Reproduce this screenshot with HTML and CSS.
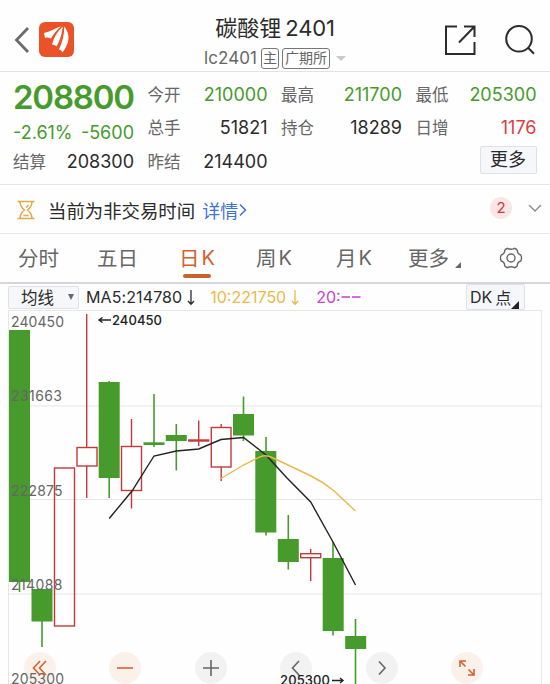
FILE: index.html
```
<!DOCTYPE html>
<html lang="zh-CN">
<head>
    <meta charset="UTF-8" />
    <meta name="viewport" content="width=device-width, initial-scale=1.0"/>
    <title>碳酸锂2401</title>
    <link rel="stylesheet" href="styles.css">
</head>
<body>

<header class="topbar">
    <div class="side">
        <svg width="16" height="28" viewBox="0 0 16 28" fill="none" stroke="#6b6b6b" stroke-width="2.8"><path d="M14 2 2.500 14 14 26"/></svg>
        <svg class="logo" width="35" height="35" viewBox="0 0 35 35">
            <rect width="35" height="35" rx="6" fill="#ea5228"/>
            <path d="M5 11C11 9.500 16 6.500 22 4.200C17.500 8 14.500 12 12 16.500C10 15.300 7.500 15.300 6 16Z" fill="#fff"/>
            <path d="M13 22.500C15 15.500 18.500 9 23.800 4.500C23 11.500 21 18.500 17.500 24.500C16.500 23.500 15 22.500 13 22.500Z" fill="#fff"/>
            <path d="M20 27.500C23.500 20 25.500 12 25.200 4.500C29.500 9.500 30.500 15.500 28.500 21.500C27 25 25.500 28 23.500 30.500C23 29.200 22 28 20 27.500Z" fill="#fff"/>
        </svg>
    </div>
    <div class="title">
        <h1>碳酸锂<span>2401</span></h1>
        <div class="subtitle">
            <span class="code">lc2401</span>
            <span class="tag">主</span>
            <span class="tag">广期所</span>
            <i class="caret"></i>
        </div>
    </div>
    <div class="side right">
        <svg width="32" height="32" viewBox="0 0 32 32" fill="none" stroke="#2c2c2c" stroke-width="2"><path d="M13 2.500H2V30H30.500V18M30.500 13V2.500H20M30 3 15 18.500"/></svg>
        <svg width="32" height="32" viewBox="0 0 32 32" fill="none" stroke="#2c2c2c" stroke-width="2"><circle cx="15" cy="14.800" r="12.800"/><path d="M24 23.800 30 29.800"/></svg>
    </div>
</header>

<section class="quote">
    <div class="last">
        <strong>208800</strong>
        <div class="change"><span>-2.61%</span><span>-5600</span></div>
    </div>
    <div class="item"><label>今开</label><b class="green">210000</b></div>
    <div class="item"><label>最高</label><b class="green">211700</b></div>
    <div class="item"><label>最低</label><b class="green">205300</b></div>
    <div class="item"><label>总手</label><b>51821</b></div>
    <div class="item"><label>持仓</label><b>18289</b></div>
    <div class="item"><label>日增</label><b class="red">1176</b></div>
    <div class="item"><label>结算</label><b>208300</b></div>
    <div class="item"><label>昨结</label><b>214400</b></div>
    <button class="more">更多</button>
</section>

<section class="notice">
    <svg width="18" height="20" viewBox="0 0 18 20" fill="none" stroke="#e5a846" stroke-width="1.500"><path d="M.5 1.500H17.500M.5 18.500H17.500M3 1.500C3 6 5 8 7.500 10C5 12 3 14 3 18.500M15 1.500C15 6 13 8 10.500 10C13 12 15 14 15 18.500M6.500 15.500H11.500M9 7.500 11.500 5"/></svg>
    <span class="notice-text">当前为非交易时间</span>
    <a class="link">详情<svg width="8" height="14" viewBox="0 0 8 14" fill="none" stroke="#3f74cf" stroke-width="1.500"><path d="M1 1.500 6.500 7 1 12.500"/></svg></a>
    <span class="count">2</span>
    <svg width="14" height="8" viewBox="0 0 14 8" fill="none" stroke="#888" stroke-width="1.300"><path d="M1 1 7 7 13 1"/></svg>
</section>

<nav class="tabs">
    <a>分时</a>
    <a>五日</a>
    <a class="active">日<span>K</span></a>
    <a>周<span>K</span></a>
    <a>月<span>K</span></a>
    <a>更多<i class="corner"></i></a>
    <svg width="24" height="24" viewBox="0 0 24 24" fill="none" stroke="#666" stroke-width="1.400" stroke-linejoin="round"><path d="M8.500 2.300Q12 4.300 15.500 2.300Q17.500 2.800 18.300 4.300Q18.300 8 21.800 9Q23.300 12 21.800 15Q18.300 16 18.300 19.700Q17.500 21.200 15.500 21.700Q12 19.700 8.500 21.700Q6.500 21.200 5.700 19.700Q5.700 16 2.200 15Q.7 12 2.200 9Q5.700 8 5.700 4.300Q6.500 2.800 8.500 2.300Z"/><circle cx="12" cy="12" r="4"/></svg>
</nav>

<div class="indicators">
    <button class="select">均线<i class="caret"></i></button>
    <span class="ma5">MA5:214780<svg width="8" height="17" viewBox="0 0 8 17" fill="none" stroke="currentColor" stroke-width="1.300"><path d="M4 1V15M1 12 4 15.300 7 12"/></svg></span>
    <span class="ma10">10:221750<svg width="8" height="17" viewBox="0 0 8 17" fill="none" stroke="currentColor" stroke-width="1.300"><path d="M4 1V15M1 12 4 15.300 7 12"/></svg></span>
    <span class="ma20">20:<svg width="20" height="4" viewBox="0 0 20 4" stroke="currentColor" stroke-width="1.300"><path d="M.5 2H9M11 2H19.500"/></svg></span>
    <button class="dk">DK<span>点</span><i class="corner"></i></button>
</div>

<main class="chart">
    <div class="controls">
        <button class="warm"><svg width="16" height="16" viewBox="0 0 16 16"><path d="M8 1 1.500 8 8 15M14 1 7.500 8 14 15"/></svg></button>
        <button class="warm"><svg width="16" height="16" viewBox="0 0 16 16"><path d="M0 8H16"/></svg></button>
        <button><svg width="16" height="16" viewBox="0 0 16 16"><path d="M0 8H16M8 0V16"/></svg></button>
        <button><svg width="16" height="16" viewBox="0 0 16 16"><path d="M11 1 4.500 8 11 15"/></svg></button>
        <button><svg width="16" height="16" viewBox="0 0 16 16"><path d="M5 1.500 11 8 5 14.500"/></svg></button>
        <button class="warm"><svg width="16" height="16" viewBox="0 0 16 16"><path d="M1 7V1H7M1 1 6.500 6.500M15 9V15H9M15 15 9.500 9.500"/></svg></button>
    </div>

    <svg class="kline" width="550" height="374" viewBox="0 310 550 374">
        <path class="grid" d="M8.500 684V310.500H541.500V684M8.500 406H541.500M8.500 499.500H541.500M8.500 594H541.500"/>

        <!-- velas -->
        <g class="down">
            <path d="M19.500 330V592M42 589V647M109.200 381V498M154 394V447M176.300 424V470.500M243.500 396.500V441M266 437V535.500M288.300 515V569.500M333 542V635.500M355.500 619V684"/>
            <rect x="9" y="330" width="21" height="252"/>
            <rect x="31.500" y="589" width="21" height="32.500"/>
            <rect x="98.700" y="382" width="21" height="96"/>
            <rect x="143.500" y="442.300" width="21" height="2.700"/>
            <rect x="165.800" y="435" width="21" height="6"/>
            <rect x="233" y="414" width="21" height="21.500"/>
            <rect x="255.300" y="451" width="21" height="81.500"/>
            <rect x="277.800" y="539" width="21" height="23"/>
            <rect x="322.700" y="558" width="21" height="73"/>
            <rect x="345.200" y="636" width="21" height="13"/>
        </g>
        <g class="up">
            <path d="M86.700 314V447M86.700 466V498M131.500 419V446M131.500 491V508.500M198.700 420.500V446M221.200 424V427M221.200 467V481M310.700 549V553M310.700 558V581"/>
            <rect x="54.500" y="468" width="20" height="158"/>
            <rect x="77" y="447.500" width="20" height="18.500"/>
            <rect x="121.500" y="446.500" width="20" height="44"/>
            <rect x="188.700" y="440" width="20" height="1"/>
            <rect x="211.300" y="427.500" width="19.700" height="39.500"/>
            <rect x="300.700" y="553.700" width="20" height="4"/>
        </g>

        <path class="line5" d="M109.200 518.500 132 491 154 456 176.300 451 198.700 449 221 439.500 243.500 437.500 266 455 287 478 310.700 502 333 542 355.500 585"/>
        <path class="line10" d="M221 478.500 243.500 465 260 456.800Q266 454.500 272 457.500L288 465 311 476 Q323 482 333 490L355.500 511"/>

        <g class="axis">
            <text x="11" y="326.500" textLength="53">240450</text>
            <text x="11" y="401" textLength="51">231663</text>
            <text x="11" y="495.500" textLength="51.500">222875</text>
            <text x="11" y="590" textLength="51.500">214088</text>
            <text x="11" y="683.700" textLength="53">205300</text>
        </g>
        <g class="mark">
            <text x="112" y="325" textLength="50">240450</text>
            <path d="M111 320H99M102.500 317.500 99 320 102.500 322.500"/>
            <text x="280" y="685" textLength="50">205300</text>
            <path d="M332 680.500H343M340 678 343 680.500 340 683"/>
        </g>
    </svg>
</main>

</body>
</html>
```
FILE: styles.css
```
* {
    box-sizing: border-box;
}

body {
    margin: 0;
    width: 550px;
    height: 684px;
    overflow: hidden;
    background-color: #fefefe;
    color: #2b2b2b;
    font-family: Inter, "Noto Sans CJK SC", sans-serif;
    font-weight: 400;
}

svg {
    display: block;
    flex: none;
}

button {
    font-family: inherit;
    color: inherit;
    padding: 0;
    border: 1px solid #dfe1e6;
    border-radius: 2px;
    background-color: #f6f7fa;
}

.caret {
    border: 5px solid transparent;
    border-top-color: #c8c8c8;
    border-bottom: none;
}

.corner {
    border-left: 6px solid transparent;
    border-bottom: 6px solid #666;
}

/* cabecera */
.topbar {
    display: flex;
    justify-content: space-between;
    height: 72px;
    padding: 0 14px 0 14px;
    border-bottom: 1px solid #e2e2e2;
}

.side {
    display: flex;
    align-items: center;
    width: 92px;
    padding-top: 8px;
}

.logo {
    margin-left: 9px;
}

.right {
    justify-content: space-between;
}

.title {
    padding-top: 12px;
}

h1 {
    display: flex;
    justify-content: center;
    margin: 0;
    font-size: 22px;
    font-weight: 400;
    line-height: 32px;
}

h1 span {
    font-size: 22px;
    letter-spacing: -0.2px;
    padding-left: 4px;
}

.subtitle {
    display: flex;
    align-items: center;
    height: 28px;
    color: #666;
}

.code {
    font-size: 17px;
    letter-spacing: 0.1px;
    margin-right: 4px;
}

.tag {
    height: 21px;
    margin-right: 3px;
    padding: 0 1px;
    border: 1px solid #777;
    border-radius: 3px;
    font-size: 14px;
    line-height: 18px;
}

.tag + .tag {
    padding: 0 2px;
}

.subtitle .caret {
    margin-left: 3px;
}

/* cotización */
.quote {
    display: grid;
    grid-template-columns: 121px 120px 121px 121px;
    grid-template-rows: repeat(3, 33.5px);
    column-gap: 13.5px;
    height: 113px;
    padding: 6px 13px 0;
    border-bottom: 1px solid #e8e8e8;
}

.last {
    grid-row: span 2;
    color: #469b2c;
}

.last strong {
    display: block;
    font-size: 33px;
    font-weight: 600;
    line-height: 38px;
    letter-spacing: -1.2px;
}

.change {
    display: flex;
    justify-content: space-between;
    font-size: 18px;
    line-height: 34px;
}

.item {
    display: flex;
    justify-content: space-between;
    align-items: center;
    line-height: 30px;
}

.item label {
    color: #666;
    font-size: 16.500px;
}

.item b {
    font-size: 18px;
    font-weight: 400;
}

.item .green {
    color: #469b2c;
}

.item .red {
    color: #d9403f;
}

.more {
    grid-column: 4;
    justify-self: end;
    width: 57px;
    height: 28px;
    margin-top: 1px;
    font-size: 18px;
    line-height: 26px;
}

/* aviso */
.notice {
    display: flex;
    align-items: center;
    height: 49px;
    padding: 1px 8px 0 17px;
    border-bottom: 1px solid #e8e8e8;
    font-size: 18.400px;
}

.notice > svg:last-child {
    margin-bottom: 4px;
}

.notice-text {
    margin: 0 7px 0 13px;
}

.link {
    display: flex;
    align-items: center;
    color: #3f74cf;
    font-size: 18px;
}

.link svg {
    margin-left: 1px;
}

.count {
    width: 22px;
    height: 22px;
    margin-left: auto;
    margin-right: 16px;
    margin-bottom: 3px;
    border-radius: 50%;
    background-color: #fce5e4;
    color: #c4403d;
    font-size: 15px;
    line-height: 22px;
    text-align: center;
}

/* pestañas */
.tabs {
    display: grid;
    grid-template-columns: 79px 82px 77px 80px 72px 91px 24px;
    align-items: center;
    height: 50px;
    padding-left: 18px;
    border-bottom: 2px solid #d6d6d6;
    color: #666;
    font-size: 20.500px;
}

.tabs a {
    display: flex;
    height: 48px;
    line-height: 49px;
}

.tabs a span {
    padding-left: 2px;
    font-size: 20px;
}

.tabs .active {
    position: relative;
    color: #d0622d;
}

.tabs .active::after {
    content: "";
    position: absolute;
    left: 4px;
    bottom: 4px;
    width: 28px;
    height: 4px;
    border-radius: 2px;
    background-color: #c9622e;
}

.tabs .corner {
    align-self: flex-end;
    margin: 0 0 14px 6px;
}

/* indicadores */
.indicators {
    display: flex;
    align-items: center;
    height: 26px;
    padding: 0 25px 0 8px;
    font-size: 16px;
}

.indicators span {
    display: flex;
    align-items: center;
}

.select {
    display: flex;
    align-items: center;
    justify-content: space-between;
    width: 71px;
    height: 23px;
    margin-right: 7px;
    padding: 0 4px 0 12px;
    font-size: 16.500px;
}

.select .caret {
    border-width: 6px 3.500px 0;
    border-top-color: #666;
}

.ma5 {
    letter-spacing: 0.1px;
}

.ma5 svg,
.ma10 svg {
    margin-left: 5px;
}

.ma10 {
    margin-left: 15px;
    color: #e9b949;
}

.ma20 {
    margin-left: 17px;
    color: #c63fd4;
}

.dk {
    display: flex;
    align-items: center;
    width: 59px;
    height: 26px;
    margin-left: auto;
    padding-left: 3px;
    font-size: 16px;
}

.dk span {
    padding-left: 3px;
}

.dk .corner {
    align-self: flex-end;
    border-left-width: 8px;
    border-bottom: 8px solid #222;
}

/* gráfico */
.chart {
    position: relative;
    height: 374px;
}

.kline {
    position: relative;
    pointer-events: none;
}

.controls {
    position: absolute;
    left: 24px;
    bottom: 0;
    display: flex;
    gap: 53.400px;
}

.controls button {
    display: flex;
    align-items: center;
    justify-content: center;
    width: 32px;
    height: 32px;
    border: none;
    border-radius: 50%;
    background-color: #f2f2f2;
    color: #666;
}

.controls .warm {
    background-color: #fbf1eb;
    color: #d6622f;
}

.controls path {
    fill: none;
    stroke: currentColor;
    stroke-width: 1.6;
}

.grid {
    fill: none;
    stroke: #e6e6e6;
}

.down {
    fill: #469b2c;
}

.down path {
    stroke: #469b2c;
    stroke-width: 1.6;
}

.up {
    fill: none;
    stroke: #c43a3a;
    stroke-width: 1.4;
}

.line5 {
    fill: none;
    stroke: #222;
    stroke-width: 1.4;
}

.line10 {
    fill: none;
    stroke: #e9b949;
    stroke-width: 1.4;
}

.axis {
    fill: #666;
    font-size: 14px;
}

.mark {
    fill: #222;
    font-size: 13px;
    font-weight: 500;
}

.mark path {
    fill: none;
    stroke: #222;
    stroke-width: 1.4;
}
```
